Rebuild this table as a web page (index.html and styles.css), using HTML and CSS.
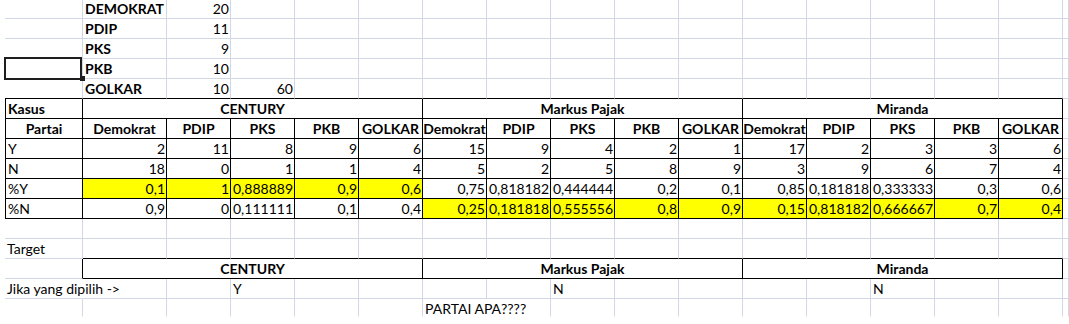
FILE: index.html
```html
<!DOCTYPE html>
<html>
<head>
<meta charset="utf-8">
<link rel="stylesheet" href="styles.css">
</head>
<body>
<div class="sheet">
  <div class="sel"><span class="handle"></span></div>
  <!-- row 1 -->
  <div></div><div class="b">DEMOKRAT</div><div class="r">20</div><div></div><div></div><div></div><div></div><div></div><div></div><div></div><div></div><div></div><div></div><div></div><div></div><div></div><div></div>
  <!-- row 2 -->
  <div></div><div class="b">PDIP</div><div class="r">11</div><div></div><div></div><div></div><div></div><div></div><div></div><div></div><div></div><div></div><div></div><div></div><div></div><div></div><div></div>
  <!-- row 3 -->
  <div></div><div class="b">PKS</div><div class="r">9</div><div></div><div></div><div></div><div></div><div></div><div></div><div></div><div></div><div></div><div></div><div></div><div></div><div></div><div></div>
  <!-- row 4 -->
  <div></div><div class="b">PKB</div><div class="r">10</div><div></div><div></div><div></div><div></div><div></div><div></div><div></div><div></div><div></div><div></div><div></div><div></div><div></div><div></div>
  <!-- row 5 -->
  <div class="bb"></div><div class="b bb">GOLKAR</div><div class="r bb">10</div><div class="r bb">60</div><div class="bb"></div><div class="bb"></div><div class="bb"></div><div class="bb"></div><div class="bb"></div><div class="bb"></div><div class="bb"></div><div class="bb"></div><div class="bb"></div><div class="bb"></div><div class="bb"></div><div class="bb"></div><div></div>
  <!-- row 6 -->
  <div class="k kl b">Kasus</div><div class="k b c s5">CENTURY</div><div class="k b c s5">Markus Pajak</div><div class="k b c s5">Miranda</div><div></div>
  <!-- row 7 -->
  <div class="k kl b c">Partai</div>
  <div class="k b c">Demokrat</div><div class="k b c">PDIP</div><div class="k b c">PKS</div><div class="k b c">PKB</div><div class="k b c">GOLKAR</div>
  <div class="k b c">Demokrat</div><div class="k b c">PDIP</div><div class="k b c">PKS</div><div class="k b c">PKB</div><div class="k b c">GOLKAR</div>
  <div class="k b c">Demokrat</div><div class="k b c">PDIP</div><div class="k b c">PKS</div><div class="k b c">PKB</div><div class="k b c">GOLKAR</div>
  <div></div>
  <!-- row 8 -->
  <div class="k kl">Y</div>
  <div class="k r">2</div><div class="k r">11</div><div class="k r">8</div><div class="k r">9</div><div class="k r">6</div>
  <div class="k r">15</div><div class="k r">9</div><div class="k r">4</div><div class="k r">2</div><div class="k r">1</div>
  <div class="k r">17</div><div class="k r">2</div><div class="k r">3</div><div class="k r">3</div><div class="k r">6</div>
  <div></div>
  <!-- row 9 -->
  <div class="k kl">N</div>
  <div class="k r">18</div><div class="k r">0</div><div class="k r">1</div><div class="k r">1</div><div class="k r">4</div>
  <div class="k r">5</div><div class="k r">2</div><div class="k r">5</div><div class="k r">8</div><div class="k r">9</div>
  <div class="k r">3</div><div class="k r">9</div><div class="k r">6</div><div class="k r">7</div><div class="k r">4</div>
  <div></div>
  <!-- row 10 -->
  <div class="k kl">%Y</div>
  <div class="k r y">0,1</div><div class="k r y">1</div><div class="k r y">0,888889</div><div class="k r y">0,9</div><div class="k r y">0,6</div>
  <div class="k r">0,75</div><div class="k r">0,818182</div><div class="k r">0,444444</div><div class="k r">0,2</div><div class="k r">0,1</div>
  <div class="k r">0,85</div><div class="k r">0,181818</div><div class="k r">0,333333</div><div class="k r">0,3</div><div class="k r">0,6</div>
  <div></div>
  <!-- row 11 -->
  <div class="k kl">%N</div>
  <div class="k r">0,9</div><div class="k r">0</div><div class="k r">0,111111</div><div class="k r">0,1</div><div class="k r">0,4</div>
  <div class="k r y">0,25</div><div class="k r y">0,181818</div><div class="k r y">0,555556</div><div class="k r y">0,8</div><div class="k r y">0,9</div>
  <div class="k r y">0,15</div><div class="k r y">0,818182</div><div class="k r y">0,666667</div><div class="k r y">0,7</div><div class="k r y">0,4</div>
  <div></div>
  <!-- row 12 -->
  <div></div><div></div><div></div><div></div><div></div><div></div><div></div><div></div><div></div><div></div><div></div><div></div><div></div><div></div><div></div><div></div><div></div>
  <!-- row 13 -->
  <div>Target</div><div class="bb"></div><div class="bb"></div><div class="bb"></div><div class="bb"></div><div class="bb"></div><div class="bb"></div><div class="bb"></div><div class="bb"></div><div class="bb"></div><div class="bb"></div><div class="bb"></div><div class="bb"></div><div class="bb"></div><div class="bb"></div><div class="bb"></div><div></div>
  <!-- row 14 -->
  <div class="br"></div><div class="k b c s5">CENTURY</div><div class="k b c s5">Markus Pajak</div><div class="k b c s5">Miranda</div><div></div>
  <!-- row 15 -->
  <div class="ov">Jika yang dipilih -&gt;</div><div></div><div></div><div>Y</div><div></div><div></div><div></div><div></div><div>N</div><div></div><div></div><div></div><div></div><div>N</div><div></div><div></div><div></div>
  <!-- row 16 -->
  <div class="lr"></div><div class="lr"></div><div class="lr"></div><div class="lr"></div><div class="lr"></div><div class="lr"></div><div class="lr ov">PARTAI APA????</div><div class="lr"></div><div class="lr"></div><div class="lr"></div><div class="lr"></div><div class="lr"></div><div class="lr"></div><div class="lr"></div><div class="lr"></div><div class="lr"></div><div class="lr"></div>
</div>
</body>
</html>
```

FILE: styles.css
```css
html, body {
  margin: 0;
  padding: 0;
  background: #fff;
  overflow: hidden;
}

body {
  font-family: Lato, "Liberation Sans", sans-serif;
  font-size: 14px;
  color: #000;
}

.sheet {
  position: relative;
  margin: -1px 0 0 5px;
  display: grid;
  grid-template-columns: 78px 84px repeat(14, 64px) 6px;
  grid-template-rows: repeat(15, 20px) 18px;
}

.sheet > div {
  box-sizing: border-box;
  border-right: 1px solid #d0d7e5;
  border-bottom: 1px solid #d0d7e5;
  padding: 1px 1px 0 2px;
  line-height: 18px;
  white-space: nowrap;
  overflow: hidden;
}

.sheet > .sel {
  position: absolute;
  left: -1px;
  top: 58px;
  width: 78px;
  height: 23px;
  border: 2px solid #1e1e1e;
  padding: 0;
  overflow: visible;
}

.handle {
  position: absolute;
  left: 74px;
  top: 17px;
  width: 5px;
  height: 5px;
  background: #1e1e1e;
}

.sheet > .k {
  border-right-color: #000;
  border-bottom-color: #000;
}

.sheet > .kl {
  border-left: 1px solid #000;
}

.sheet > .bb {
  border-bottom-color: #000;
}

.sheet > .br {
  border-right-color: #000;
}

.sheet > .lr {
  border-bottom-color: transparent;
}

.sheet > .ov {
  overflow: visible;
  border-right-color: transparent;
  position: relative;
  z-index: 1;
}

.b {
  font-weight: 700;
}

.r {
  text-align: right;
}

.sheet > .c {
  text-align: center;
  padding-left: 0;
  padding-right: 0;
}

.s5 {
  grid-column: span 5;
}

.y {
  background: #ffff00;
}
```
